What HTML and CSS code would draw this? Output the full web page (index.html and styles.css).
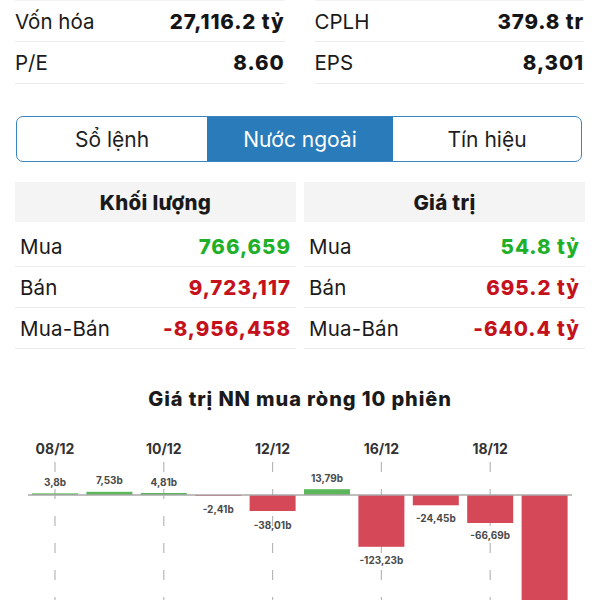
FILE: index.html
```html
<!DOCTYPE html>
<html lang="vi">
<head>
  <meta charset="UTF-8" />
  <meta name="viewport" content="width=device-width, initial-scale=1.0"/>
  <title>Nước ngoài</title>
  <link rel="stylesheet" href="styles.css">
</head>
<body>
  <div class="stats">
    <div class="stat-col">
      <div class="stat-row"><span>Vốn hóa</span><b>27,116.2 tỷ</b></div>
      <div class="stat-row"><span>P/E</span><b>8.60</b></div>
    </div>
    <div class="stat-col">
      <div class="stat-row"><span>CPLH</span><b>379.8 tr</b></div>
      <div class="stat-row"><span>EPS</span><b>8,301</b></div>
    </div>
  </div>

  <div class="tabs">
    <div class="tab">Sổ lệnh</div>
    <div class="tab active">Nước ngoài</div>
    <div class="tab">Tín hiệu</div>
  </div>

  <div class="foreign">
    <div class="foreign-col">
      <div class="foreign-head">Khối lượng</div>
      <div class="foreign-row"><span>Mua</span><b class="up">766,659</b></div>
      <div class="foreign-row"><span>Bán</span><b class="down">9,723,117</b></div>
      <div class="foreign-row"><span>Mua-Bán</span><b class="down">-8,956,458</b></div>
    </div>
    <div class="foreign-col">
      <div class="foreign-head">Giá trị</div>
      <div class="foreign-row"><span>Mua</span><b class="up">54.8 tỷ</b></div>
      <div class="foreign-row"><span>Bán</span><b class="down">695.2 tỷ</b></div>
      <div class="foreign-row"><span>Mua-Bán</span><b class="down">-640.4 tỷ</b></div>
    </div>
  </div>

  <div class="chart-title">Giá trị NN mua ròng 10 phiên</div>

  <svg class="chart" width="600" height="180" viewBox="0 0 600 180">
    <!-- đường dọc theo ngày -->
    <g class="grid">
      <line x1="55" y1="37" x2="55" y2="180"/>
      <line x1="163.8" y1="37" x2="163.8" y2="180"/>
      <line x1="272.6" y1="37" x2="272.6" y2="180"/>
      <line x1="381.4" y1="37" x2="381.4" y2="180"/>
      <line x1="490.2" y1="37" x2="490.2" y2="180"/>
    </g>

    <g class="dates">
      <text x="55" y="29">08/12</text>
      <text x="163.8" y="29">10/12</text>
      <text x="272.6" y="29">12/12</text>
      <text x="381.4" y="29">16/12</text>
      <text x="490.2" y="29">18/12</text>
    </g>

    <g class="bars">
      <rect class="pos" x="32" y="68.4" width="46" height="1.6"/>
      <rect class="pos" x="86.4" y="66.8" width="46" height="3.2"/>
      <rect class="pos" x="140.8" y="68" width="46" height="2"/>
      <rect class="neg" x="195.2" y="70" width="46" height="1"/>
      <rect class="neg" x="249.6" y="70" width="46" height="16"/>
      <rect class="pos" x="304" y="64.2" width="46" height="5.8"/>
      <rect class="neg" x="358.4" y="70" width="46" height="51.8"/>
      <rect class="neg" x="412.8" y="70" width="46" height="10.3"/>
      <rect class="neg" x="467.2" y="70" width="46" height="28"/>
      <rect class="neg" x="521.6" y="70" width="46" height="120"/>
    </g>

    <line class="axis" x1="28" y1="70" x2="572" y2="70"/>

    <g class="values">
      <text x="55" y="61">3,8b</text>
      <text x="109.4" y="59">7,53b</text>
      <text x="163.8" y="61">4,81b</text>
      <text x="218.2" y="88">-2,41b</text>
      <text x="272.6" y="104">-38,01b</text>
      <text x="327" y="57">13,79b</text>
      <text x="381.4" y="139">-123,23b</text>
      <text x="435.8" y="97">-24,45b</text>
      <text x="490.2" y="114">-66,69b</text>
    </g>
  </svg>
</body>
</html>
```

FILE: styles.css
```css
body {
  margin: 0;
  background-color: #fff;
  font-family: 'Inter', 'Noto Sans', sans-serif;
  color: #1a1a1a;
  overflow: hidden;
}

.stats {
  display: grid;
  grid-template-columns: 1fr 1fr;
  column-gap: 30px;
  padding: 0 16px 0 15px;
}

.stat-row {
  display: flex;
  justify-content: space-between;
  align-items: center;
  height: 41px;
  border-bottom: 1px solid #ececec;
  font-size: 20.5px;
}

.stat-row:first-child {
  height: 40px;
  border-top: 1px solid #f2f2f2;
}

.stat-row b {
  font-weight: 800;
  letter-spacing: 0.9px;
  color: #151515;
}

.tabs {
  display: grid;
  grid-template-columns: 190px 186px 1fr;
  margin: 32px 18px 0 16px;
  height: 44px;
  border: 1.2px solid #3a84bf;
  border-radius: 7px;
  overflow: hidden;
}

.tab {
  display: flex;
  align-items: center;
  justify-content: center;
  font-size: 21px;
  color: #1e1e1e;
}

.tab.active {
  background-color: #2a7bb9;
  color: #fff;
}

.foreign {
  display: grid;
  grid-template-columns: 1fr 1fr;
  column-gap: 8px;
  margin: 20px 15px 0 15px;
}

.foreign-head {
  height: 40px;
  margin-bottom: 4px;
  background-color: #f4f4f4;
  display: flex;
  align-items: center;
  justify-content: center;
  font-size: 20.5px;
  font-weight: 800;
  letter-spacing: 0.3px;
}

.foreign-row {
  display: flex;
  justify-content: space-between;
  align-items: center;
  height: 40px;
  padding: 0 5px;
  border-bottom: 1px solid #ececec;
  font-size: 20.5px;
  letter-spacing: 0.2px;
}

.foreign-row b {
  font-weight: 800;
  letter-spacing: 1px;
}

.up {
  color: #1fb02a;
}

.down {
  color: #c4111c;
}

.chart-title {
  margin-top: 38px;
  text-align: center;
  font-size: 20px;
  line-height: 24px;
  font-weight: 800;
  letter-spacing: 0.9px;
}

.chart {
  display: block;
  margin-top: 14px;
}

.grid line {
  stroke: #b8b8b8;
  stroke-width: 1.2;
  stroke-dasharray: 10 17;
}

.axis {
  stroke: #a9a9a9;
  stroke-width: 1.5;
}

.pos {
  fill: #5cb65a;
}

.neg {
  fill: #d54858;
}

.dates text {
  font-size: 14px;
  font-weight: 700;
  fill: #333;
  text-anchor: middle;
}

.values text {
  font-size: 10px;
  font-weight: 700;
  fill: #4a4a4a;
  text-anchor: middle;
}
```
